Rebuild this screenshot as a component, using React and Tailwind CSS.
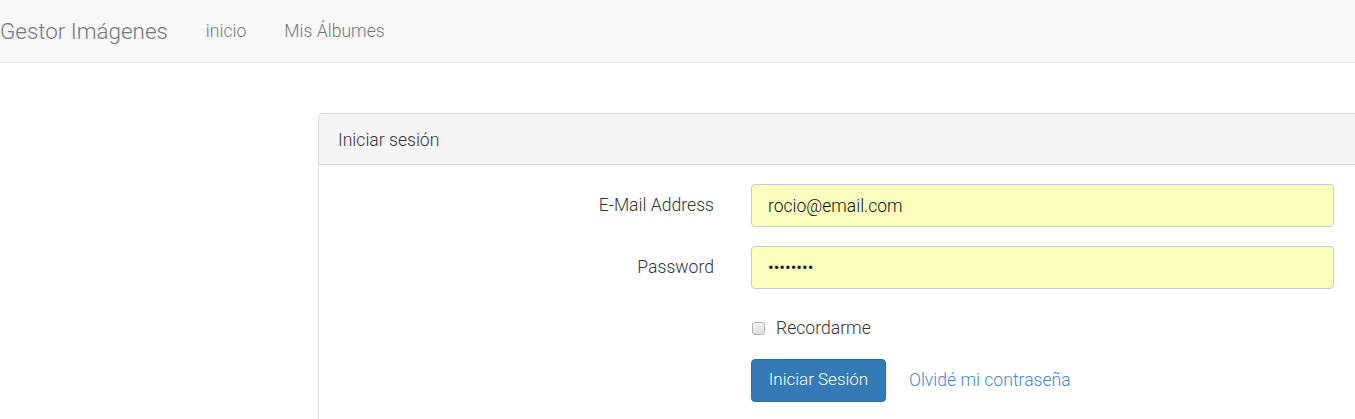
import React from 'react';

const font = { fontFamily: 'Roboto, "Noto Sans", sans-serif' };

const Navbar = () => (
  <nav className="h-[63px] bg-[#f8f8f8] border-b border-[#e7e7e7] flex items-center font-light">
    <a className="text-[22.4px] text-[#777] leading-none">Gestor Imágenes</a>
    <div className="flex items-center ml-[38px] gap-[38px] text-[17.6px] text-[#777]">
      <a>inicio</a>
      <a>Mis Álbumes</a>
    </div>
  </nav>
);

const FormRow = ({ label, children }) => (
  <div className="flex items-center">
    <label className="w-[395px] text-right text-[17.6px] font-light text-[#333]">{label}</label>
    <div className="ml-[37px]">{children}</div>
  </div>
);

const inputCls =
  'w-[583px] h-[43px] rounded-[4px] border border-[#cccccc] bg-[#faffbd] pl-[16px] text-[17.5px] font-light text-[#111] outline-none';

export default function App() {
  return (
    <div className="w-full h-[419px] overflow-hidden bg-white" style={font}>
      <Navbar />
      <div className="pl-[318px] pt-[50px]">
        {/* Login panel */}
        <div className="w-[1100px] h-[400px] border border-[#dcdcdc] rounded-[4px]">
          <div className="h-[51px] bg-[#f5f5f5] border-b border-[#dcdcdc] rounded-t-[4px] flex items-center pl-[19px] pt-[3px] text-[17.6px] font-light text-[#333]">
            Iniciar sesión
          </div>
          <div className="pt-[19px] flex flex-col">
            <FormRow label="E-Mail Address">
              <input className={inputCls} type="email" readOnly value="rocio@email.com" />
            </FormRow>
            <div className="mt-[19px]">
              <FormRow label="Password">
                <input className={inputCls} type="password" readOnly value="12345678" />
              </FormRow>
            </div>
            <div className="ml-[432px] mt-[31px] flex items-center h-[16px]">
              <span className="w-[13px] h-[13px] ml-[1px] rounded-[3px] border border-[#b5b5b5] bg-gradient-to-b from-[#f4f4f4] to-[#dcdcdc]"></span>
              <span className="ml-[11px] text-[17.6px] font-light text-[#333]">Recordarme</span>
            </div>
            <div className="ml-[432px] mt-[23px] flex items-center">
              <button className="h-[43px] w-[135px] rounded-[4px] bg-[#337ab7] border border-[#2e6da4] text-white text-[17px] font-light pb-[1px]">
                Iniciar Sesión
              </button>
              <a className="ml-[23px] text-[17.6px] font-light text-[#4a86cf]">Olvidé mi contraseña</a>
            </div>
          </div>
        </div>
      </div>
    </div>
  );
}
